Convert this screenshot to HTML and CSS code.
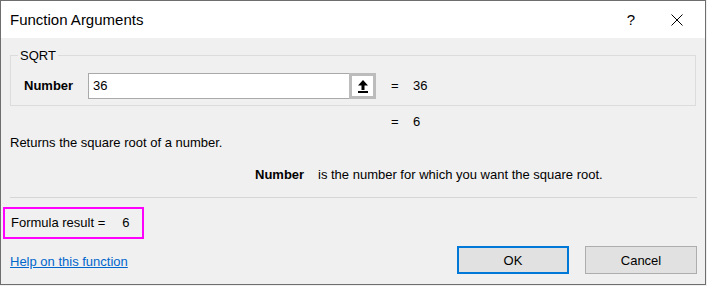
FILE: index.html
```html
<!DOCTYPE html>
<html lang="en">
<head>
    <meta charset="UTF-8">
    <title>Function Arguments</title>
    <link rel="stylesheet" href="styles.css">
</head>
<body>
    <div class="dialog">
        <div class="titlebar">
            <span class="title">Function Arguments</span>
            <div class="title-controls">
                <span class="title-btn">?</span>
                <span class="title-btn">
                    <svg width="12" height="12" viewBox="0 0 12 12">
                        <path d="M0.5 0.5 L11.5 11.5 M11.5 0.5 L0.5 11.5" stroke="#000" stroke-width="1" fill="none"/>
                    </svg>
                </span>
            </div>
        </div>

        <div class="dialog-body">
            <fieldset class="func-group">
                <legend>SQRT</legend>
                <div class="arg-row">
                    <label class="arg-label">Number</label>
                    <div class="arg-input">
                        <span class="arg-text">36</span>
                        <span class="ref-btn">
                            <svg width="10" height="13" viewBox="0 0 10 13">
                                <path d="M5 0 L10 5.5 H6.5 V10 H3.5 V5.5 H0 Z" fill="#000"/>
                                <rect x="0" y="11" width="10" height="2" fill="#000"/>
                            </svg>
                        </span>
                    </div>
                    <span class="eq">=</span>
                    <span class="eq-value">36</span>
                </div>
            </fieldset>

            <div class="result-row">
                <span class="eq">=</span>
                <span class="eq-value">6</span>
            </div>

            <p class="func-desc">Returns the square root of a number.</p>

            <div class="arg-desc">
                <strong class="arg-desc-name">Number</strong>
                <span>is the number for which you want the square root.</span>
            </div>

            <div class="divider"></div>

            <div class="formula-result">
                Formula result =<span class="formula-value">6</span>
            </div>

            <div class="footer">
                <a href="#" class="help-link">Help on this function</a>
                <div class="footer-buttons">
                    <button class="dlg-button default">OK</button>
                    <button class="dlg-button">Cancel</button>
                </div>
            </div>
        </div>
    </div>
</body>
</html>
```

FILE: styles.css
```css
* {
    margin: 0;
    padding: 0;
    box-sizing: border-box;
}

body {
    font-family: 'Liberation Sans', Arial, sans-serif;
    font-size: 13px;
    line-height: 16px;
    color: #000;
    background: #f0f0f0;
}

.dialog {
    width: 706px;
    height: 285px;
    border: 1px solid #6e6e6e;
    background: #f0f0f0;
    display: flex;
    flex-direction: column;
}

/* title bar */
.titlebar {
    height: 37px;
    background: #fff;
    display: flex;
    align-items: center;
    justify-content: space-between;
    padding-left: 9px;
}

.title {
    font-size: 15px;
}

.title-controls {
    display: flex;
    margin-right: 5px;
}

.title-btn {
    width: 46px;
    height: 36px;
    display: flex;
    align-items: center;
    justify-content: center;
    font-size: 15px;
}

/* body */
.dialog-body {
    flex: 1;
    padding: 0 8px 0 9px;
}

.func-group {
    margin-top: 10px;
    width: 686px;
    border: 1px solid #dcdcdc;
    padding: 10px 0 6px 13px;
}

.func-group legend {
    margin-left: -6px;
    padding: 0 2px;
    line-height: 15px;
}

.arg-row {
    display: flex;
    align-items: center;
}

.arg-label {
    width: 64px;
    font-weight: bold;
}

.arg-input {
    display: flex;
    width: 288px;
    height: 26px;
}

.arg-text {
    flex: 1;
    background: #fff;
    border: 1px solid #a9a9a9;
    border-right: none;
    padding: 4px 0 0 4px;
}

.ref-btn {
    width: 27px;
    height: 26px;
    background: #fff;
    border: 3px solid #bcbcbc;
    display: flex;
    align-items: center;
    justify-content: center;
}

.eq {
    width: 22px;
    margin-left: 15px;
}

.result-row {
    display: flex;
    margin-top: 8px;
    padding-left: 366px;
}

.func-desc {
    margin-top: 5px;
}

.arg-desc {
    display: flex;
    margin-top: 16px;
    padding-left: 245px;
}

.arg-desc-name {
    width: 63px;
}

.divider {
    margin-top: 14px;
    width: 687px;
    height: 1px;
    background: #d6d6d6;
}

.formula-result {
    margin: 9px 0 0 -7px;
    width: 141px;
    height: 32px;
    border: 2px solid #ff00ff;
    padding-left: 6px;
    display: flex;
    align-items: center;
}

.formula-value {
    margin-left: 17px;
}

.footer {
    display: flex;
    align-items: center;
    justify-content: space-between;
    margin-top: 7px;
}

.help-link {
    color: #0066cc;
    padding-top: 3px;
}

.footer-buttons {
    display: flex;
    gap: 16px;
}

.dlg-button {
    width: 112px;
    height: 28px;
    background: #e1e1e1;
    border: 1px solid #adadad;
    font-family: inherit;
    font-size: 13px;
    color: #000;
}

.dlg-button.default {
    border: 2px solid #0078d7;
}
```
